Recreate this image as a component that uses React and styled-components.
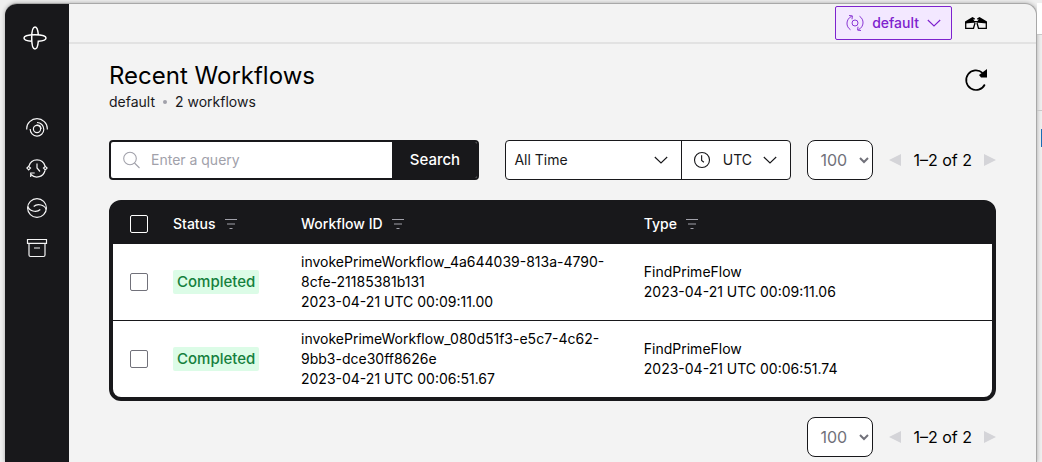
import React from "react";
import styled, { createGlobalStyle } from "styled-components";

const ink = "#18181b";
const line = "#d4d4d8";

const GlobalStyle = createGlobalStyle`
  *, *::before, *::after { box-sizing: border-box; }
  body {
    margin: 0;
    background: #efefef;
    color: ${ink};
    font-family: Inter, "Liberation Sans", sans-serif;
    font-size: 14px;
    line-height: 20px;
  }
  button, input, select { font: inherit; color: inherit; margin: 0; }
  svg { display: block; flex: none; }
`;

const Desktop = styled.div`
  display: flex;
  min-height: 100vh;
  padding: 3px 0 0 5px;
  overflow: hidden;
`;

const Window = styled.div`
  flex: 1;
  min-width: 0;
  display: flex;
  border: 1px solid #a8a8a8;
  border-width: 1px 1px 0 0;
  border-radius: 12px 12px 0 0;
  background: #f3f3f3;
  box-shadow: 0 0 4px rgba(0, 0, 0, 0.3);
  overflow: hidden;
`;

const Backdrop = styled.div`
  width: 5px;
  display: flex;
  flex-direction: column;
`;

const BackdropBlock = styled.div`
  height: ${(p) => p.$height}px;
  background: ${(p) => p.$fill || "transparent"};
  border-bottom: 1px solid #c8c8c8;
`;

const BackdropMark = styled.div`
  align-self: flex-end;
  width: 1px;
  height: 18px;
  margin-top: 18px;
  background: #1b6db5;
`;

const Sidebar = styled.nav`
  flex: none;
  width: 64px;
  display: flex;
  flex-direction: column;
  align-items: center;
  padding-top: 22px;
  background: ${ink};
  color: #fff;
`;

const LogoLink = styled.a`
  color: inherit;
  margin-right: 4px;
`;

const NavList = styled.div`
  display: flex;
  flex-direction: column;
  gap: 16px;
  margin-top: 66px;
`;

const NavLink = styled.a`
  display: block;
  color: #f4f4f5;
`;

const Page = styled.div`
  flex: 1;
  min-width: 0;
`;

const TopBar = styled.header`
  display: flex;
  align-items: center;
  justify-content: flex-end;
  gap: 12px;
  height: 40px;
  padding-right: 48px;
  border-bottom: 2px solid #e2e2e2;
`;

const NamespaceButton = styled.button`
  display: flex;
  align-items: center;
  gap: 8px;
  height: 34px;
  padding: 0 10px;
  border: 1px solid #7e22ce;
  border-radius: 2px;
  background: #f3e8ff;
  color: #7e22ce;
  font-weight: 500;
`;

const IconButton = styled.button`
  display: flex;
  padding: 0;
  border: 0;
  background: none;
  color: #000;
`;

const Main = styled.main`
  padding: 16px 40px 0;
`;

const TitleRow = styled.div`
  display: flex;
  align-items: flex-start;
  justify-content: space-between;
`;

const Title = styled.h1`
  margin: 0;
  color: #000;
  font-size: 24px;
  font-weight: 400;
  line-height: 32px;
`;

const Summary = styled.p`
  display: flex;
  align-items: center;
  gap: 8px;
  margin: 0;
`;

const Dot = styled.span`
  width: 4px;
  height: 4px;
  border-radius: 50%;
  background: #a1a1aa;
`;

const RefreshButton = styled(IconButton)`
  margin: 8px 8px 0 0;
`;

const Toolbar = styled.div`
  display: flex;
  align-items: center;
  margin: 28px 0 20px;
`;

const SearchForm = styled.form`
  flex: 1;
  min-width: 0;
  display: flex;
  height: 40px;
  border: 2px solid ${ink};
  border-radius: 4px;
  background: #fff;
  overflow: hidden;
`;

const SearchField = styled.label`
  flex: 1;
  min-width: 0;
  display: flex;
  align-items: center;
  gap: 8px;
  padding-left: 8px;
  color: #a1a1aa;
`;

const SearchInput = styled.input`
  flex: 1;
  min-width: 0;
  padding: 0;
  border: 0;
  outline: 0;
  background: none;
  color: ${ink};
  &::placeholder { color: #a1a1aa; opacity: 1; }
`;

const SearchButton = styled.button`
  width: 85px;
  padding: 0;
  border: 0;
  background: ${ink};
  color: #fff;
  font-size: 15px;
  font-weight: 500;
`;

const TimeFilter = styled.div`
  flex: none;
  display: flex;
  width: 286px;
  height: 40px;
  margin: 0 16px 0 26px;
  border: 1px solid ${ink};
  border-radius: 4px;
  background: #fff;
  overflow: hidden;
`;

const FilterButton = styled.button`
  flex: ${(p) => (p.$grow ? 1 : "none")};
  width: ${(p) => (p.$grow ? "auto" : "109px")};
  display: flex;
  align-items: center;
  justify-content: space-between;
  padding: ${(p) => (p.$grow ? "0 13px 0 8px" : "0 13px 0 11px")};
  border: 0;
  border-left: ${(p) => (p.$grow ? 0 : 1)}px solid ${ink};
  background: none;
  color: ${ink};
`;

const Pager = styled.div`
  flex: none;
  display: flex;
  align-items: center;
  justify-content: flex-end;
  gap: 16px;
`;

const PageSize = styled.select`
  width: 66px;
  height: 40px;
  padding: 0 0 0 8px;
  border: 1px solid ${ink};
  border-radius: 8px;
  background: #fff;
  color: #71717a;
  font-size: 16px;
`;

const PageNav = styled.div`
  display: flex;
  align-items: center;
  gap: 12px;
  color: #000;
  font-size: 16px;
  white-space: nowrap;
`;

const PageButton = styled(IconButton)`
  color: ${line};
`;

const TableFrame = styled.div`
  border: 4px solid ${ink};
  border-radius: 12px;
  background: ${ink};
  overflow: hidden;
`;

const Table = styled.table`
  width: 100%;
  border-collapse: collapse;
  table-layout: fixed;
`;

const Column = styled.col`
  width: ${(p) => p.$width};
`;

const HeadCell = styled.th`
  height: 40px;
  padding: 0 8px;
  color: #fff;
  font-weight: 500;
  text-align: left;
`;

const HeadLabel = styled.span`
  display: flex;
  align-items: center;
  gap: 9px;
`;

const Row = styled.tr`
  background: #fff;
  & + & { border-top: 1px solid ${ink}; }
`;

const Cell = styled.td`
  padding: 8px;
  color: #000;
  vertical-align: middle;
`;

const Tick = styled.input`
  appearance: none;
  display: block;
  width: 18px;
  height: 18px;
  margin: 0 auto;
  border: 1px solid ${(p) => (p.$light ? "#fff" : "#71717a")};
  border-radius: 2px;
  background: ${(p) => (p.$light ? "transparent" : "#fff")};
`;

const Badge = styled.span`
  display: inline-block;
  padding: 2px 4px;
  border-radius: 2px;
  background: #dcfce7;
  color: #15803d;
  font-size: 15px;
  font-weight: 500;
`;

const Footer = styled.footer`
  margin: 16px 0 5px;
`;

function Icon({ size = 24, stroke = 1, children }) {
  return (
    <svg width={size} height={size} viewBox="0 0 24 24" fill="none" stroke="currentColor" strokeWidth={stroke} aria-hidden="true">
      {children}
    </svg>
  );
}

const LogoIcon = () => (
  <Icon stroke={1.5}>
    <path d="M12 1C9.500 1 8.700 6 8.700 12S9.500 23 12 23c2 0 3-4 3.300-7.700C19 15 23 14 23 12c0-2.500-5-3.300-11-3.300S1 9.500 1 12c0 2 4 3 7.800 3.300M12 1c2 0 3 4 3.300 7.700" />
  </Icon>
);

const WorkflowsIcon = () => (
  <Icon stroke={1.2}>
    <path d="M1.700 13.500V12.500a10.300 9.800 0 0 1 20.600 0v1" />
    <path d="M5.200 13a6.800 6.800 0 1 0 6.800-6.500" />
    <path d="M11.500 9.200c2.500-.2 4.400 1.400 4.600 3.800" />
    <circle cx="12" cy="13" r="3.600" />
  </Icon>
);

const SchedulesIcon = () => (
  <Icon stroke={1.2}>
    <path d="M4 10a8.300 8.300 0 0 1 16 0M20 14.500A8.300 8.300 0 0 1 6 18.500M5.700 21V17h4" />
    <path d="M12 7.500V12l3 3.500" />
    <path d="M3.700 10.300l1.800 1.800-1.800 1.800-1.800-1.800zM20.300 10.300l1.800 1.800-1.800 1.800-1.800-1.800z" />
  </Icon>
);

const BatchIcon = () => (
  <Icon stroke={1.200}>
    <circle cx="12" cy="12" r="9.400" />
    <path d="M2.800 10.500C4 14.500 11 17.500 15.300 13.500M21.200 13.500C20 9.500 13 6.500 8.700 10.500" />
  </Icon>
);

const ArchiveIcon = () => (
  <Icon stroke={1.200}>
    <path d="M2.500 3.500h19v3.800h-19zM4 7.500v11.500q0 1.500 1.500 1.500h13q1.500 0 1.500-1.500V7.500M9 12h6" />
  </Icon>
);

const NamespaceIcon = () => (
  <Icon size={18} stroke={1.200}>
    <circle cx="12" cy="12" r="4" />
    <path d="M7.500 3C-.5 7-.5 17 6 21M16.500 21c8-4 8-14 1.500-18M4 2l4.500.5L8 7M20 22l-4.500-.5.500-4.500" />
  </Icon>
);

const ChevronIcon = () => (
  <svg width="14" height="8" viewBox="0 0 14 8" fill="none" stroke="currentColor" strokeWidth="1.100" aria-hidden="true">
    <path d="M.8 1 7 7l6.200-6" />
  </svg>
);

const GlassesIcon = () => (
  <svg width="24" height="14" viewBox="0 0 24 14" fill="none" stroke="currentColor" strokeWidth="1.300" aria-hidden="true">
    <path fill="currentColor" stroke="none" d="M1 5.500 8.500 1l2.500 1.500-.6 1.200-1.400-.4L10.500 5h3L15 3.300l-1.400.4-.6-1.200L15.500 1 23 5.500V7.500l-8.500-.8H13L12 6l-1 .7H9.500L1 7.500z" />
    <path d="M1.700 6v6.300h7.800l1.500-5.300M22.300 6v6.300h-7.800L13 7" />
  </svg>
);

const RefreshIcon = () => (
  <Icon stroke={1.700}>
    <path d="M20.800 16.500A9.800 9.800 0 1 1 18.500 4.800" />
    <path d="M23 1v8.500h-6l-2-2.500z" fill="currentColor" stroke="none" />
  </Icon>
);

const SearchIcon = () => (
  <Icon stroke={1.100}>
    <circle cx="11" cy="10.500" r="6.300" />
    <path d="M15.500 15 20.500 20" />
  </Icon>
);

const ClockIcon = () => (
  <Icon size={18} stroke={1.500}>
    <circle cx="12" cy="12" r="10" />
    <path d="M11.500 5.500V12.500l3 2.500" />
  </Icon>
);

const SortIcon = () => (
  <svg width="12" height="10" viewBox="0 0 12 10" fill="none" stroke="#a1a1aa" aria-hidden="true">
    <path d="M0 .5h12M2 5h8M4.500 9.500h3" />
  </svg>
);

const Triangle = ({ points }) => (
  <svg width="12" height="12" viewBox="0 0 12 12" fill="currentColor" aria-hidden="true">
    <path d={points} />
  </svg>
);

function Pagination() {
  return (
    <Pager>
      <PageSize aria-label="Workflows per page" defaultValue="100">
        <option>100</option>
        <option>250</option>
        <option>500</option>
      </PageSize>
      <PageNav>
        <PageButton aria-label="Previous page"><Triangle points="M12 0v12L0 6z" /></PageButton>
        <span>1–2 of 2</span>
        <PageButton aria-label="Next page"><Triangle points="M0 0v12l12-6z" /></PageButton>
      </PageNav>
    </Pager>
  );
}

const navItems = [
  ["Workflows", WorkflowsIcon],
  ["Schedules", SchedulesIcon],
  ["Batch operations", BatchIcon],
  ["Archive", ArchiveIcon],
];

const workflows = [
  {
    id: "invokePrimeWorkflow_4a644039-813a-4790-8cfe-21185381b131",
    started: "2023-04-21 UTC 00:09:11.00",
    type: "FindPrimeFlow",
    ended: "2023-04-21 UTC 00:09:11.06",
  },
  {
    id: "invokePrimeWorkflow_080d51f3-e5c7-4c62-9bb3-dce30ff8626e",
    started: "2023-04-21 UTC 00:06:51.67",
    type: "FindPrimeFlow",
    ended: "2023-04-21 UTC 00:06:51.74",
  },
];

export default function App() {
  return (
    <>
      <GlobalStyle />
      <Desktop>
        <Window>
          <Sidebar>
            <LogoLink href="#home" aria-label="Home"><LogoIcon /></LogoLink>
            <NavList>
              {navItems.map(([label, Glyph]) => (
                <NavLink key={label} href="#nav" aria-label={label}><Glyph /></NavLink>
              ))}
            </NavList>
          </Sidebar>
          <Page>
            <TopBar>
              <NamespaceButton><NamespaceIcon />default<ChevronIcon /></NamespaceButton>
              <IconButton aria-label="Data encoder"><GlassesIcon /></IconButton>
            </TopBar>
            <Main>
              <TitleRow>
                <div>
                  <Title>Recent Workflows</Title>
                  <Summary>default<Dot />2 workflows</Summary>
                </div>
                <RefreshButton aria-label="Refresh"><RefreshIcon /></RefreshButton>
              </TitleRow>
              <Toolbar>
                <SearchForm onSubmit={(e) => e.preventDefault()}>
                  <SearchField>
                    <SearchIcon />
                    <SearchInput aria-label="Query" placeholder="Enter a query" />
                  </SearchField>
                  <SearchButton>Search</SearchButton>
                </SearchForm>
                <TimeFilter>
                  <FilterButton $grow>All Time<ChevronIcon /></FilterButton>
                  <FilterButton><ClockIcon />UTC<ChevronIcon /></FilterButton>
                </TimeFilter>
                <Pagination />
              </Toolbar>
              <TableFrame>
                <Table>
                  <colgroup>
                    <Column $width="52px" />
                    <Column $width="128px" />
                    <Column $width="39%" />
                    <Column $width="auto" />
                  </colgroup>
                  <thead>
                    <tr>
                      <HeadCell><Tick type="checkbox" $light aria-label="Select all" /></HeadCell>
                      {["Status", "Workflow ID", "Type"].map((name) => (
                        <HeadCell key={name}><HeadLabel>{name}<SortIcon /></HeadLabel></HeadCell>
                      ))}
                    </tr>
                  </thead>
                  <tbody>
                    {workflows.map((w) => (
                      <Row key={w.id}>
                        <Cell><Tick type="checkbox" aria-label={`Select ${w.id}`} /></Cell>
                        <Cell><Badge>Completed</Badge></Cell>
                        <Cell>{w.id}<br />{w.started}</Cell>
                        <Cell>{w.type}<br />{w.ended}</Cell>
                      </Row>
                    ))}
                  </tbody>
                </Table>
              </TableFrame>
              <Footer><Pagination /></Footer>
            </Main>
          </Page>
        </Window>
        <Backdrop>
          <BackdropBlock $height={32} $fill="#fff" />
          <BackdropBlock $height={76} />
          <BackdropMark />
        </Backdrop>
      </Desktop>
    </>
  );
}
